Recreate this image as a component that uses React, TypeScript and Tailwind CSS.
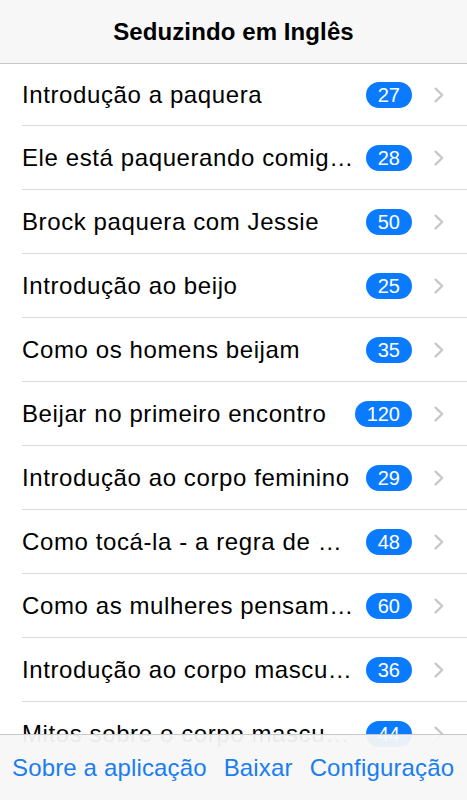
import React from "react";

const rows: [string, number][] = [
  ["Introdução a paquera", 27],
  ["Ele está paquerando comigo?", 28],
  ["Brock paquera com Jessie", 50],
  ["Introdução ao beijo", 25],
  ["Como os homens beijam", 35],
  ["Beijar no primeiro encontro", 120],
  ["Introdução ao corpo feminino", 29],
  ["Como tocá-la - a regra de ouro", 48],
  ["Como as mulheres pensam sobre sexo", 60],
  ["Introdução ao corpo masculino", 36],
  ["Mitos sobre o corpo masculino", 44],
];

function Chevron() {
  return (
    <svg width="10" height="16" viewBox="0 0 10 16" className="shrink-0">
      <path d="M1.6 1.6 L8.2 8 L1.6 14.4" fill="none" stroke="#c7c7cc" strokeWidth="2.3" strokeLinecap="round" strokeLinejoin="round" />
    </svg>
  );
}

export default function App() {
  return (
    <div
      className="relative h-[800px] w-[467px] overflow-hidden bg-white text-black"
      style={{ fontFamily: '"Liberation Sans", Arial, sans-serif' }}
    >
      <div className="flex h-[64px] items-center justify-center border-b border-[#c8c7cc] bg-[#f7f7f7]">
        <span className="text-[24px] font-bold tracking-[0.1px]">Seduzindo em Inglês</span>
      </div>
      <div className="flex flex-col">
        {rows.map(([t, n], i) => (
          <div key={i} className={`flex items-center pl-[22px] ${i === 0 ? "h-[62px]" : "h-[64px]"}`}>
            <div className="flex h-full min-w-0 flex-1 items-center border-b border-[#d9d9dc] pr-[23px]">
              <span className="min-w-0 flex-1 truncate pr-[12px] text-[24px] tracking-[0.6px]">{t}</span>
              <span className="flex h-[26px] min-w-[46px] shrink-0 items-center justify-center rounded-full bg-[#0a7aff] px-[12px] text-[20px] text-white">
                {n}
              </span>
              <span className="ml-[22px] flex">
                <Chevron />
              </span>
            </div>
          </div>
        ))}
      </div>
      <div className="absolute bottom-0 left-0 right-0 flex h-[66px] items-center gap-[17px] border-t border-[#c8c7cc] bg-[#f7f7f7]/95 px-[12px] text-[24px] tracking-[0.15px] text-[#1a7ef0]">
        <span>Sobre a aplicação</span>
        <span>Baixar</span>
        <span>Configuração</span>
      </div>
    </div>
  );
}
